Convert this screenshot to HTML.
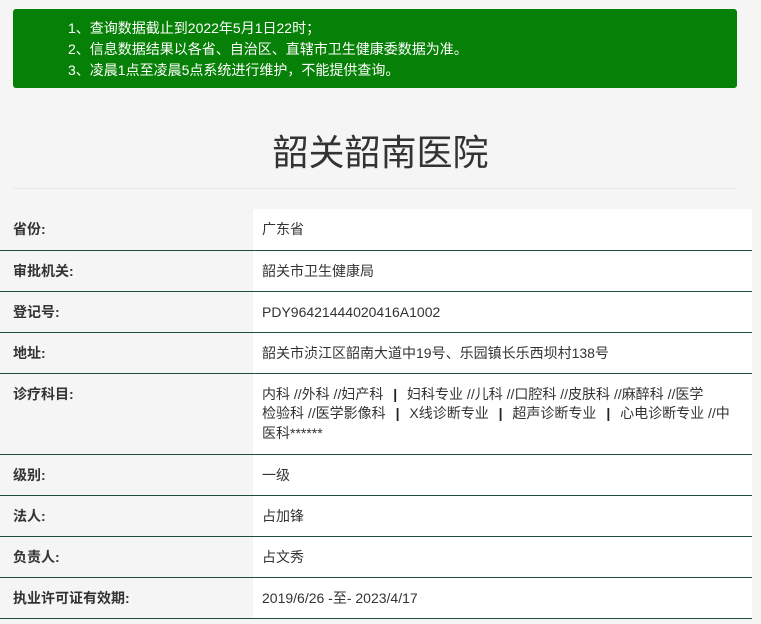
<!DOCTYPE html>
<html><head><meta charset="utf-8"><style>
body{margin:0;background:#f5f5f5;font-family:"Liberation Sans","Microsoft YaHei","Noto Sans CJK SC",sans-serif;width:761px;height:624px;overflow:hidden;}
.notice{position:absolute;left:13px;top:9px;width:724px;height:79px;background:#068006;border-radius:3px;color:#fff;font-size:14px;line-height:21px;box-sizing:border-box;padding:9px 0 0 55px;}
h1{position:absolute;left:0;width:761px;top:129px;margin:0;text-align:center;font-weight:normal;font-size:36px;color:#333;line-height:48px;}
.hr{position:absolute;left:13px;width:724px;top:188px;border-top:1px solid #e8e8e8;}
table{position:absolute;left:0;top:209px;width:752px;border-collapse:collapse;font-size:14px;color:#333;}
td{border-bottom:1px solid #1e4d3a;padding:0;vertical-align:top;line-height:19.5px;}
td.l{width:240px;padding:11px 0 0 13px;font-weight:bold;background:#f5f5f5;}
td.v{background:#fff;padding:11px 5px 0 9px;white-space:nowrap;}
td.v b{color:#222;margin:0 6px;}
tr{height:41px;}
</style></head><body>
<div class="notice">1、查询数据截止到2022年5月1日22时；<br>2、信息数据结果以各省、自治区、直辖市卫生健康委数据为准。<br>3、凌晨1点至凌晨5点系统进行维护，不能提供查询。</div>
<h1>韶关韶南医院</h1>
<div class="hr"></div>
<table>
<tr><td class="l">省份:</td><td class="v">广东省</td></tr>
<tr><td class="l">审批机关:</td><td class="v">韶关市卫生健康局</td></tr>
<tr><td class="l">登记号:</td><td class="v">PDY96421444020416A1002</td></tr>
<tr><td class="l">地址:</td><td class="v">韶关市浈江区韶南大道中19号、乐园镇长乐西坝村138号</td></tr>
<tr style="height:81px"><td class="l">诊疗科目:</td><td class="v">内科 //外科 //妇产科 <b>|</b> 妇科专业 //儿科 //口腔科 //皮肤科 //麻醉科 //医学<br>检验科 //医学影像科 <b>|</b> X线诊断专业 <b>|</b> 超声诊断专业 <b>|</b> 心电诊断专业 //中<br>医科******</td></tr>
<tr><td class="l">级别:</td><td class="v">一级</td></tr>
<tr><td class="l">法人:</td><td class="v">占加锋</td></tr>
<tr><td class="l">负责人:</td><td class="v">占文秀</td></tr>
<tr><td class="l">执业许可证有效期:</td><td class="v">2019/6/26 -至- 2023/4/17</td></tr>
</table>
</body></html>
